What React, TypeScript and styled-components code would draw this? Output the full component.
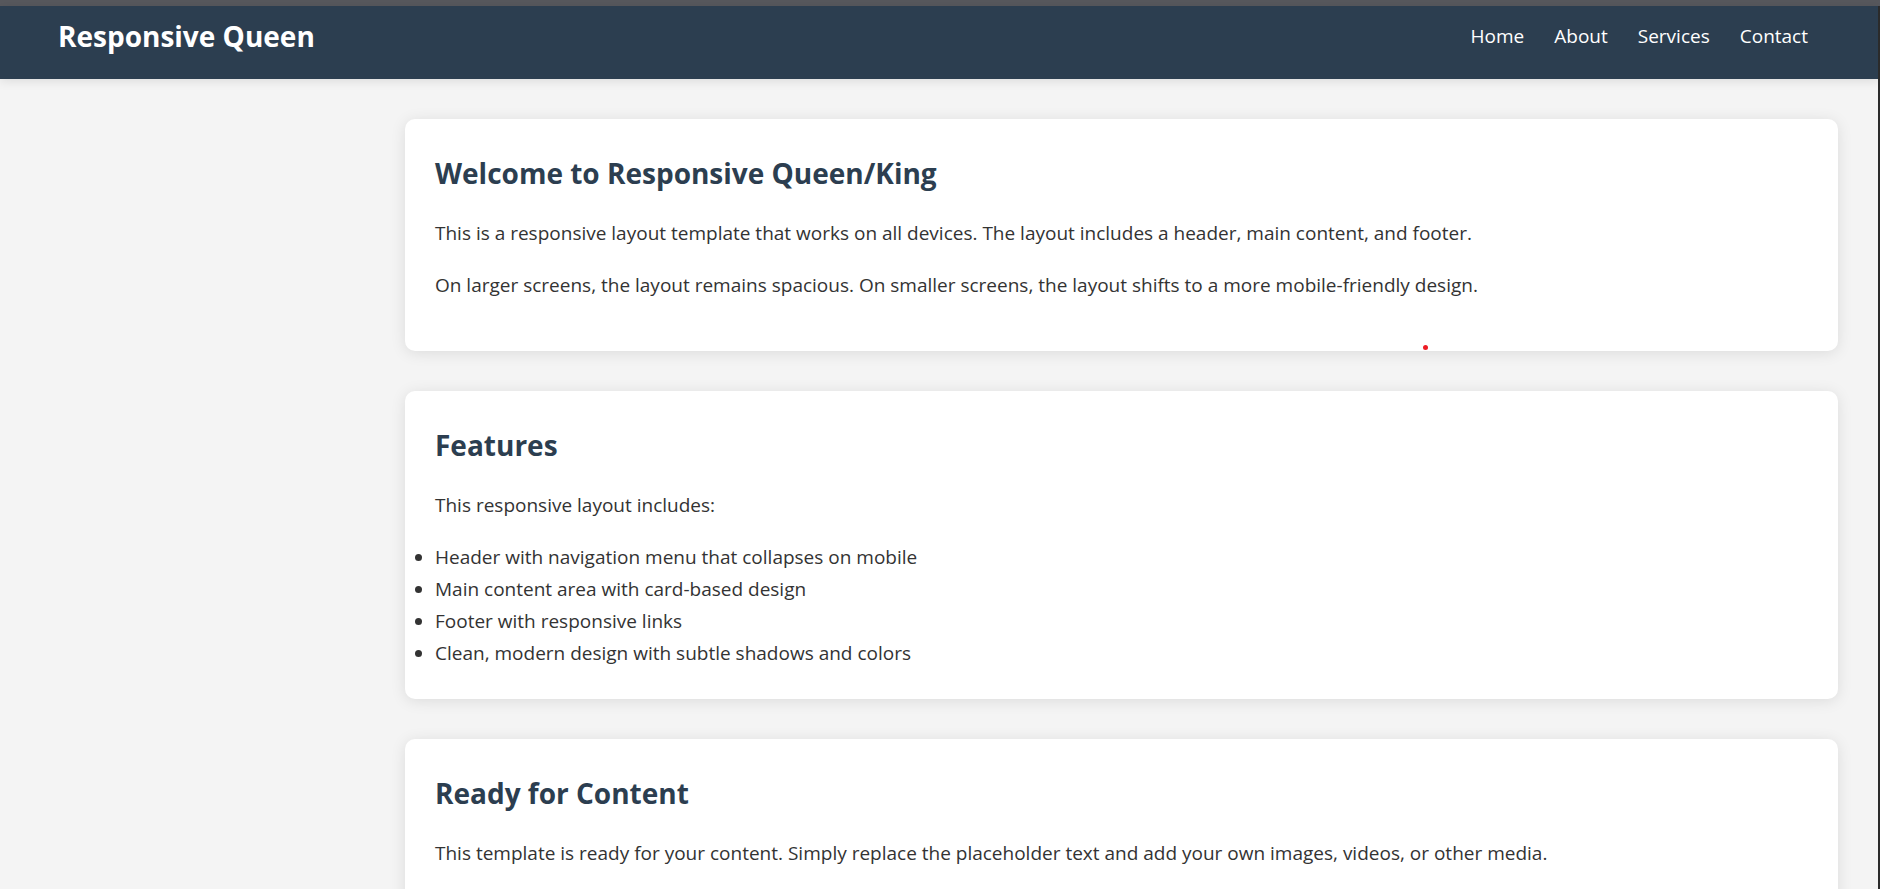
import React from "react";
import styled, { createGlobalStyle } from "styled-components";

const GlobalStyle = createGlobalStyle`
  * {
    box-sizing: border-box;
    margin: 0;
    padding: 0;
  }

  html {
    background: #f4f4f4;
    overflow-x: hidden;
  }

  body {
    font-family: "Segoe UI", "Open Sans", sans-serif;
    font-size: 19px;
    line-height: 32px;
    color: #333;
  }
`;

const Page = styled.div`
  position: relative;
  min-height: 100vh;
  border-top: 6px solid #57585d;
`;

const WindowEdge = styled.div`
  position: absolute;
  top: 0;
  right: 0;
  bottom: 0;
  width: 2px;
  background: #2b2b2b;
`;

const Header = styled.header`
  display: flex;
  justify-content: space-between;
  align-items: flex-start;
  padding: 6px 72px 19px 58px;
  background: #2c3e50;
  color: #fff;
  box-shadow: 0 2px 10px rgba(0, 0, 0, 0.1);
`;

const Logo = styled.div`
  font-size: 28px;
  font-weight: 700;
  line-height: 48px;
`;

const NavList = styled.ul`
  display: flex;
  gap: 30px;
  list-style: none;
`;

const NavLink = styled.a`
  display: block;
  color: #fff;
  text-decoration: none;
  line-height: 48px;
`;

const Main = styled.main`
  display: flex;
  flex-direction: column;
  gap: 40px;
  margin-left: 365px;
  padding: 40px 42px 40px 40px;
`;

const Card = styled.section`
  padding: 30px;
  background: #fff;
  border-radius: 10px;
  box-shadow: 0 2px 15px rgba(0, 0, 0, 0.1);
`;

const CardTitle = styled.h2`
  margin-bottom: 20px;
  color: #2c3e50;
  font-size: 28px;
  line-height: 48px;
`;

const Text = styled.p`
  margin-bottom: 20px;
`;

const FeatureList = styled.ul`
  list-style: disc;
`;

const Pointer = styled.span`
  position: absolute;
  top: 339px;
  left: 1423px;
  width: 5px;
  height: 5px;
  border-radius: 50%;
  background: #ed1c24;
`;

const links = ["Home", "About", "Services", "Contact"];

const features = [
  "Header with navigation menu that collapses on mobile",
  "Main content area with card-based design",
  "Footer with responsive links",
  "Clean, modern design with subtle shadows and colors",
];

export default function App() {
  return (
    <Page>
      <GlobalStyle />
      <Header>
        <Logo>Responsive Queen</Logo>
        <nav>
          <NavList>
            {links.map((link) => (
              <li key={link}>
                <NavLink href={`#${link.toLowerCase()}`}>{link}</NavLink>
              </li>
            ))}
          </NavList>
        </nav>
      </Header>
      <Main>
        <Card>
          <CardTitle>Welcome to Responsive Queen/King</CardTitle>
          <Text>
            This is a responsive layout template that works on all devices. The layout includes a
            header, main content, and footer.
          </Text>
          <Text>
            On larger screens, the layout remains spacious. On smaller screens, the layout shifts to
            a more mobile-friendly design.
          </Text>
        </Card>
        <Card>
          <CardTitle>Features</CardTitle>
          <Text>This responsive layout includes:</Text>
          <FeatureList>
            {features.map((feature) => (
              <li key={feature}>{feature}</li>
            ))}
          </FeatureList>
        </Card>
        <Card>
          <CardTitle>Ready for Content</CardTitle>
          <Text>
            This template is ready for your content. Simply replace the placeholder text and add
            your own images, videos, or other media.
          </Text>
        </Card>
      </Main>
      <Pointer />
      <WindowEdge />
    </Page>
  );
}
